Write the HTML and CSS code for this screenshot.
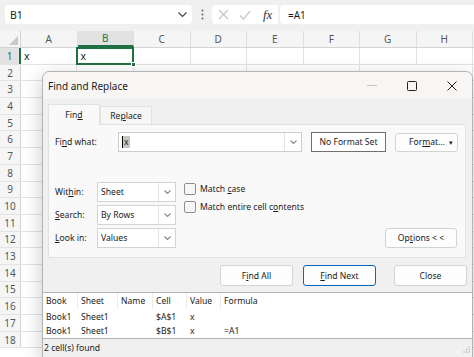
FILE: index.html
```html
<!DOCTYPE html>
<html>
<head>
    <meta charset="UTF-8">
    <title>Find and Replace</title>
    <link rel="stylesheet" href="styles.css">
</head>
<body>
    <!-- Formula bar -->
    <div class="formula-bar">
        <div class="name-box">
            <span>B1</span>
            <svg class="chev" width="9" height="5" viewBox="0 0 9 5"><polyline points="0.5,0.5 4.5,4.5 8.5,0.5"/></svg>
        </div>
        <div class="bar-dots">
            <svg width="3" height="11" viewBox="0 0 3 11"><circle cx="1.5" cy="1.5" r="1"/><circle cx="1.5" cy="5.5" r="1"/><circle cx="1.5" cy="9.5" r="1"/></svg>
        </div>
        <div class="fx-box">
            <svg class="fx-icon" width="11" height="11" viewBox="0 0 11 11"><path d="M1 1 L10 10 M10 1 L1 10"/></svg>
            <svg class="fx-icon" width="12" height="10" viewBox="0 0 12 10"><polyline points="1,5.5 4.5,9 11,1"/></svg>
            <span class="fx">fx</span>
        </div>
        <div class="formula-input">=A1</div>
    </div>

    <!-- Sheet -->
    <div class="sheet">
        <div class="col-heads">
            <div class="corner">
                <svg width="9" height="9" viewBox="0 0 9 9"><polygon points="9,0 9,9 0,9"/></svg>
            </div>
            <div class="ch">A</div>
            <div class="ch selected">B</div>
            <div class="ch">C</div>
            <div class="ch">D</div>
            <div class="ch">E</div>
            <div class="ch">F</div>
            <div class="ch">G</div>
            <div class="ch">H</div>
        </div>
        <div class="row">
            <div class="rh selected">1</div>
            <div class="cell">x</div>
            <div class="cell active">x<span class="handle"></span></div>
            <div class="cell"></div>
            <div class="cell"></div>
            <div class="cell"></div>
            <div class="cell"></div>
            <div class="cell"></div>
            <div class="cell"></div>
        </div>
        <div class="row"><div class="rh">2</div><div class="cells"></div></div>
        <div class="row"><div class="rh">3</div><div class="cells"></div></div>
        <div class="row"><div class="rh">4</div><div class="cells"></div></div>
        <div class="row"><div class="rh">5</div><div class="cells"></div></div>
        <div class="row"><div class="rh">6</div><div class="cells"></div></div>
        <div class="row"><div class="rh">7</div><div class="cells"></div></div>
        <div class="row"><div class="rh">8</div><div class="cells"></div></div>
        <div class="row"><div class="rh">9</div><div class="cells"></div></div>
        <div class="row"><div class="rh">10</div><div class="cells"></div></div>
        <div class="row"><div class="rh">11</div><div class="cells"></div></div>
        <div class="row"><div class="rh">12</div><div class="cells"></div></div>
        <div class="row"><div class="rh">13</div><div class="cells"></div></div>
        <div class="row"><div class="rh">14</div><div class="cells"></div></div>
        <div class="row"><div class="rh">15</div><div class="cells"></div></div>
        <div class="row"><div class="rh">16</div><div class="cells"></div></div>
        <div class="row"><div class="rh">17</div><div class="cells"></div></div>
        <div class="row"><div class="rh">18</div><div class="cells"></div></div>
    </div>

    <!-- Find and Replace dialog -->
    <div class="dialog">
        <div class="dialog-title">
            <span>Find and Replace</span>
            <div class="win-btns">
                <div class="win-btn"><svg width="10" height="1" viewBox="0 0 10 1"><line x1="0" y1="0.5" x2="10" y2="0.5" class="dim"/></svg></div>
                <div class="win-btn"><svg width="10" height="10" viewBox="0 0 10 10"><rect x="0.5" y="0.5" width="9" height="9" rx="1"/></svg></div>
                <div class="win-btn"><svg width="10" height="10" viewBox="0 0 10 10"><path d="M0.5 0.5 L9.5 9.5 M9.5 0.5 L0.5 9.5"/></svg></div>
            </div>
        </div>
        <div class="dialog-body">
            <div class="tabs">
                <div class="tab active"><span>Fin<u>d</u></span></div>
                <div class="tab"><span>Re<u>p</u>lace</span></div>
            </div>
            <div class="panel">
                <div class="find-row">
                    <div class="label find-label">Fi<u>n</u>d what:</div>
                    <div class="combo">
                        <div class="value"><span class="sel-text">x</span></div>
                        <div class="drop"><svg width="7" height="4" viewBox="0 0 7 4"><polyline points="0.5,0.5 3.5,3.5 6.5,0.5"/></svg></div>
                    </div>
                    <div class="btn fmt-set">No Format Set</div>
                    <div class="btn fmt"><span>For<u>m</u>at...</span><span class="caret">▾</span></div>
                </div>
                <div class="options">
                    <div class="opt-grid">
                        <div class="label">Wit<u>h</u>in:</div>
                        <div class="select">
                            <div class="value">Sheet</div>
                            <div class="drop"><svg width="7" height="4" viewBox="0 0 7 4"><polyline points="0.5,0.5 3.5,3.5 6.5,0.5"/></svg></div>
                        </div>
                        <div class="label"><u>S</u>earch:</div>
                        <div class="select">
                            <div class="value">By Rows</div>
                            <div class="drop"><svg width="7" height="4" viewBox="0 0 7 4"><polyline points="0.5,0.5 3.5,3.5 6.5,0.5"/></svg></div>
                        </div>
                        <div class="label"><u>L</u>ook in:</div>
                        <div class="select">
                            <div class="value">Values</div>
                            <div class="drop"><svg width="7" height="4" viewBox="0 0 7 4"><polyline points="0.5,0.5 3.5,3.5 6.5,0.5"/></svg></div>
                        </div>
                    </div>
                    <div class="checks">
                        <div class="check"><span class="box"></span><span>Match <u>c</u>ase</span></div>
                        <div class="check"><span class="box"></span><span>Match entire cell c<u>o</u>ntents</span></div>
                    </div>
                    <div class="btn opt-btn"><span>Op<u>t</u>ions &lt; &lt;</span></div>
                </div>
            </div>
            <div class="actions">
                <div class="btn act"><span>F<u>i</u>nd All</span></div>
                <div class="btn act default"><span><u>F</u>ind Next</span></div>
                <div class="btn act">Close</div>
            </div>
        </div>
        <div class="results">
            <div class="res-row res-head">
                <div>Book</div><div>Sheet</div><div>Name</div><div>Cell</div><div>Value</div><div>Formula</div>
            </div>
            <div class="res-body">
                <div class="res-row">
                    <div>Book1</div><div>Sheet1</div><div></div><div>$A$1</div><div>x</div><div></div>
                </div>
                <div class="res-row">
                    <div>Book1</div><div>Sheet1</div><div></div><div>$B$1</div><div>x</div><div>=A1</div>
                </div>
            </div>
        </div>
        <div class="status">
            <span>2 cell(s) found</span>
            <svg class="grip" width="7" height="7" viewBox="0 0 7 7"><circle cx="6" cy="1" r="0.7"/><circle cx="6" cy="3.5" r="0.7"/><circle cx="3.5" cy="3.5" r="0.7"/><circle cx="6" cy="6" r="0.7"/><circle cx="3.5" cy="6" r="0.7"/><circle cx="1" cy="6" r="0.7"/></svg>
        </div>
    </div>
</body>
</html>
```

FILE: styles.css
```css
* {
    box-sizing: border-box;
}
body {
    margin: 0;
    width: 474px;
    height: 357px;
    overflow: hidden;
    position: relative;
    background: #fff;
    color: #1b1b1b;
    font-family: "Noto Sans", sans-serif;
}

/* formula bar */
.formula-bar {
    display: flex;
    align-items: flex-start;
    height: 31px;
    padding: 5px 0 0 5px;
    background: #f0f0f0;
}
.name-box {
    width: 187px;
    height: 19px;
    display: flex;
    align-items: center;
    justify-content: space-between;
    padding: 0 5px;
    background: #fff;
    border-radius: 4px;
    font-size: 10.5px;
}
.chev polyline, .drop polyline {
    fill: none;
    stroke: #444;
    stroke-width: 1.1;
}
.bar-dots {
    width: 20px;
    height: 19px;
    display: flex;
    align-items: center;
    justify-content: center;
    fill: #666;
}
.fx-box {
    width: 66px;
    height: 19px;
    display: flex;
    align-items: center;
    gap: 10px;
    padding-left: 6px;
    background: #fff;
    border-radius: 4px 0 0 4px;
}
.fx-icon path, .fx-icon polyline {
    fill: none;
    stroke: #c6c6c6;
    stroke-width: 1.2;
}
.fx {
    font-family: "Liberation Serif", serif;
    font-style: italic;
    font-size: 13px;
    color: #333;
    margin-left: 2px;
}
.formula-input {
    flex: 1;
    height: 19px;
    margin-left: 2px;
    padding-left: 8px;
    display: flex;
    align-items: center;
    background: #fff;
    border-radius: 4px 0 0 4px;
    font-size: 10px;
}

/* sheet grid */
.col-heads {
    display: flex;
    height: 17px;
    background: #f5f5f5;
    border-bottom: 1px solid #d4d4d4;
}
.corner {
    width: 21px;
    display: flex;
    align-items: flex-end;
    justify-content: flex-end;
    padding: 0 2px 2px 0;
    border-right: 1px solid #d4d4d4;
    fill: #c9c9c9;
}
.ch {
    width: 56.5px;
    display: flex;
    align-items: center;
    justify-content: center;
    border-right: 1px solid #dedede;
    font-size: 10px;
    color: #555;
}
.ch.selected {
    background: #e2e2e2;
    color: #1e7145;
    border-bottom: 2px solid #1e7145;
}
.row {
    display: flex;
    height: 16.7px;
    border-bottom: 1px solid #e3e3e3;
}
.rh {
    width: 21px;
    flex-shrink: 0;
    display: flex;
    align-items: center;
    justify-content: center;
    background: #f5f5f5;
    border-right: 1px solid #d4d4d4;
    font-size: 10px;
    color: #555;
}
.rh.selected {
    background: #e2e2e2;
    color: #1e7145;
    border-right: 2px solid #1e7145;
}
.cell {
    width: 56.5px;
    flex-shrink: 0;
    display: flex;
    align-items: center;
    padding-left: 3px;
    border-right: 1px solid #e3e3e3;
    font-size: 10.5px;
}
.cell.active {
    position: relative;
}
.cell.active::after {
    content: '';
    position: absolute;
    top: -1px;
    left: -2px;
    right: -1px;
    bottom: -1px;
    border: 2px solid #1e7145;
}
.handle {
    position: absolute;
    right: -3px;
    bottom: -3px;
    width: 5px;
    height: 5px;
    background: #1e7145;
    border: 1px solid #fff;
    z-index: 1;
}
.cells {
    flex: 1;
    background: repeating-linear-gradient(to right, transparent 0 55.5px, #e3e3e3 55.5px 56.5px);
}

/* dialog */
.dialog {
    position: absolute;
    left: 42px;
    top: 71px;
    width: 431px;
    display: flex;
    flex-direction: column;
    background: #f0f0f0;
    border: 1px solid #b4b4b4;
    border-radius: 7px 7px 0 0;
    box-shadow: 0 6px 20px rgba(0, 0, 0, 0.22);
    font-size: 8.6px;
}
.dialog-title {
    height: 27px;
    display: flex;
    align-items: center;
    padding-left: 5px;
    background: #f7f6f5;
    border-radius: 7px 7px 0 0;
    font-size: 10px;
}
.win-btns {
    margin-left: auto;
    display: flex;
    height: 100%;
}
.win-btn {
    width: 40px;
    display: flex;
    align-items: center;
    justify-content: center;
}
.win-btn rect, .win-btn path {
    fill: none;
    stroke: #222;
    stroke-width: 1;
}
.win-btn .dim {
    stroke: #c4c4c4;
}
.dialog-body {
    padding: 5px 6px 0 5px;
}
.tabs {
    display: flex;
    align-items: flex-end;
    height: 20px;
}
.tab {
    width: 52px;
    height: 18px;
    display: flex;
    align-items: center;
    justify-content: center;
    background: #f6f6f6;
    border: 1px solid #e2e2e2;
    border-bottom: none;
}
.tab.active {
    height: 21px;
    margin-bottom: -1px;
    background: #f9f9f9;
    position: relative;
}
.panel {
    height: 134px;
    padding: 7px 7px 9px 6px;
    background: #f9f9f9;
    border: 1px solid #e2e2e2;
}
.find-row {
    display: flex;
    align-items: center;
    height: 20px;
}
.find-label {
    width: 63px;
}
.combo {
    width: 184px;
    height: 20px;
    display: flex;
    background: #fff;
    border: 1px solid #cdcdcd;
}
.value {
    flex: 1;
    display: flex;
    align-items: center;
    padding-left: 3px;
}
.drop {
    width: 17px;
    display: flex;
    align-items: center;
    justify-content: center;
    border-left: 1px solid #e4e4e4;
}
.drop polyline {
    stroke: #888;
}
.sel-text {
    background: #c6c6c6;
    padding: 0 1px;
    border-left: 1px solid #000;
    line-height: 12px;
}
.btn {
    height: 20px;
    display: flex;
    align-items: center;
    justify-content: center;
    background: #fdfdfd;
    border: 1px solid #d3d3d3;
    border-radius: 3px;
}
.fmt-set {
    width: 75px;
    margin-left: 9px;
    background: #fff;
    border-color: #6f6f6f;
    border-radius: 0;
}
.fmt {
    width: 63px;
    height: 19px;
    margin-left: 9px;
    justify-content: space-between;
    padding: 0 4px 0 13px;
}
.caret {
    font-size: 7px;
}
.options {
    display: flex;
    align-items: flex-end;
    margin-top: 30px;
}
.opt-grid {
    display: grid;
    grid-template-columns: 42px 79px;
    grid-auto-rows: 20px;
    row-gap: 3px;
    align-items: center;
}
.select {
    height: 20px;
    display: flex;
    background: #fff;
    border: 1px solid #d3d3d3;
}
.checks {
    align-self: flex-start;
    display: flex;
    flex-direction: column;
    gap: 5px;
    margin-left: 8px;
}
.check {
    display: flex;
    align-items: center;
    gap: 4px;
    height: 13px;
}
.box {
    width: 12px;
    height: 12px;
    background: #f6f6f6;
    border: 1px solid #8f8f8f;
    border-radius: 2px;
}
.opt-btn {
    width: 72px;
    margin-left: auto;
    margin-right: 1px;
}
.actions {
    display: flex;
    justify-content: flex-end;
    margin-top: 7px;
    margin-right: -1px;
}
.act {
    width: 73px;
    height: 21px;
}
.act:first-child {
    margin-right: 10px;
}
.act.default {
    margin-right: 18px;
    border-color: #0a64c0;
}

/* results list */
.results {
    margin: 6px -1px 0 -1px;
    height: 47px;
    background: #fff;
    border: 1px solid #b2b2b2;
}
.res-row {
    display: grid;
    grid-template-columns: 35px 40px 35px 34px 34px 1fr;
    height: 14px;
    align-items: center;
}
.res-row div {
    padding-left: 3px;
}
.res-head {
    height: 16px;
}
.res-head div {
    height: 100%;
    display: flex;
    align-items: center;
    border-right: 1px solid #ececec;
}
.res-head div:last-child {
    border-right: none;
}
.res-body {
    padding-top: 1px;
}
.status {
    height: 18px;
    display: flex;
    align-items: center;
    justify-content: space-between;
    padding: 0 2px 0 1px;
}
.grip {
    fill: #aaa;
    margin-top: 3px;
}
```
